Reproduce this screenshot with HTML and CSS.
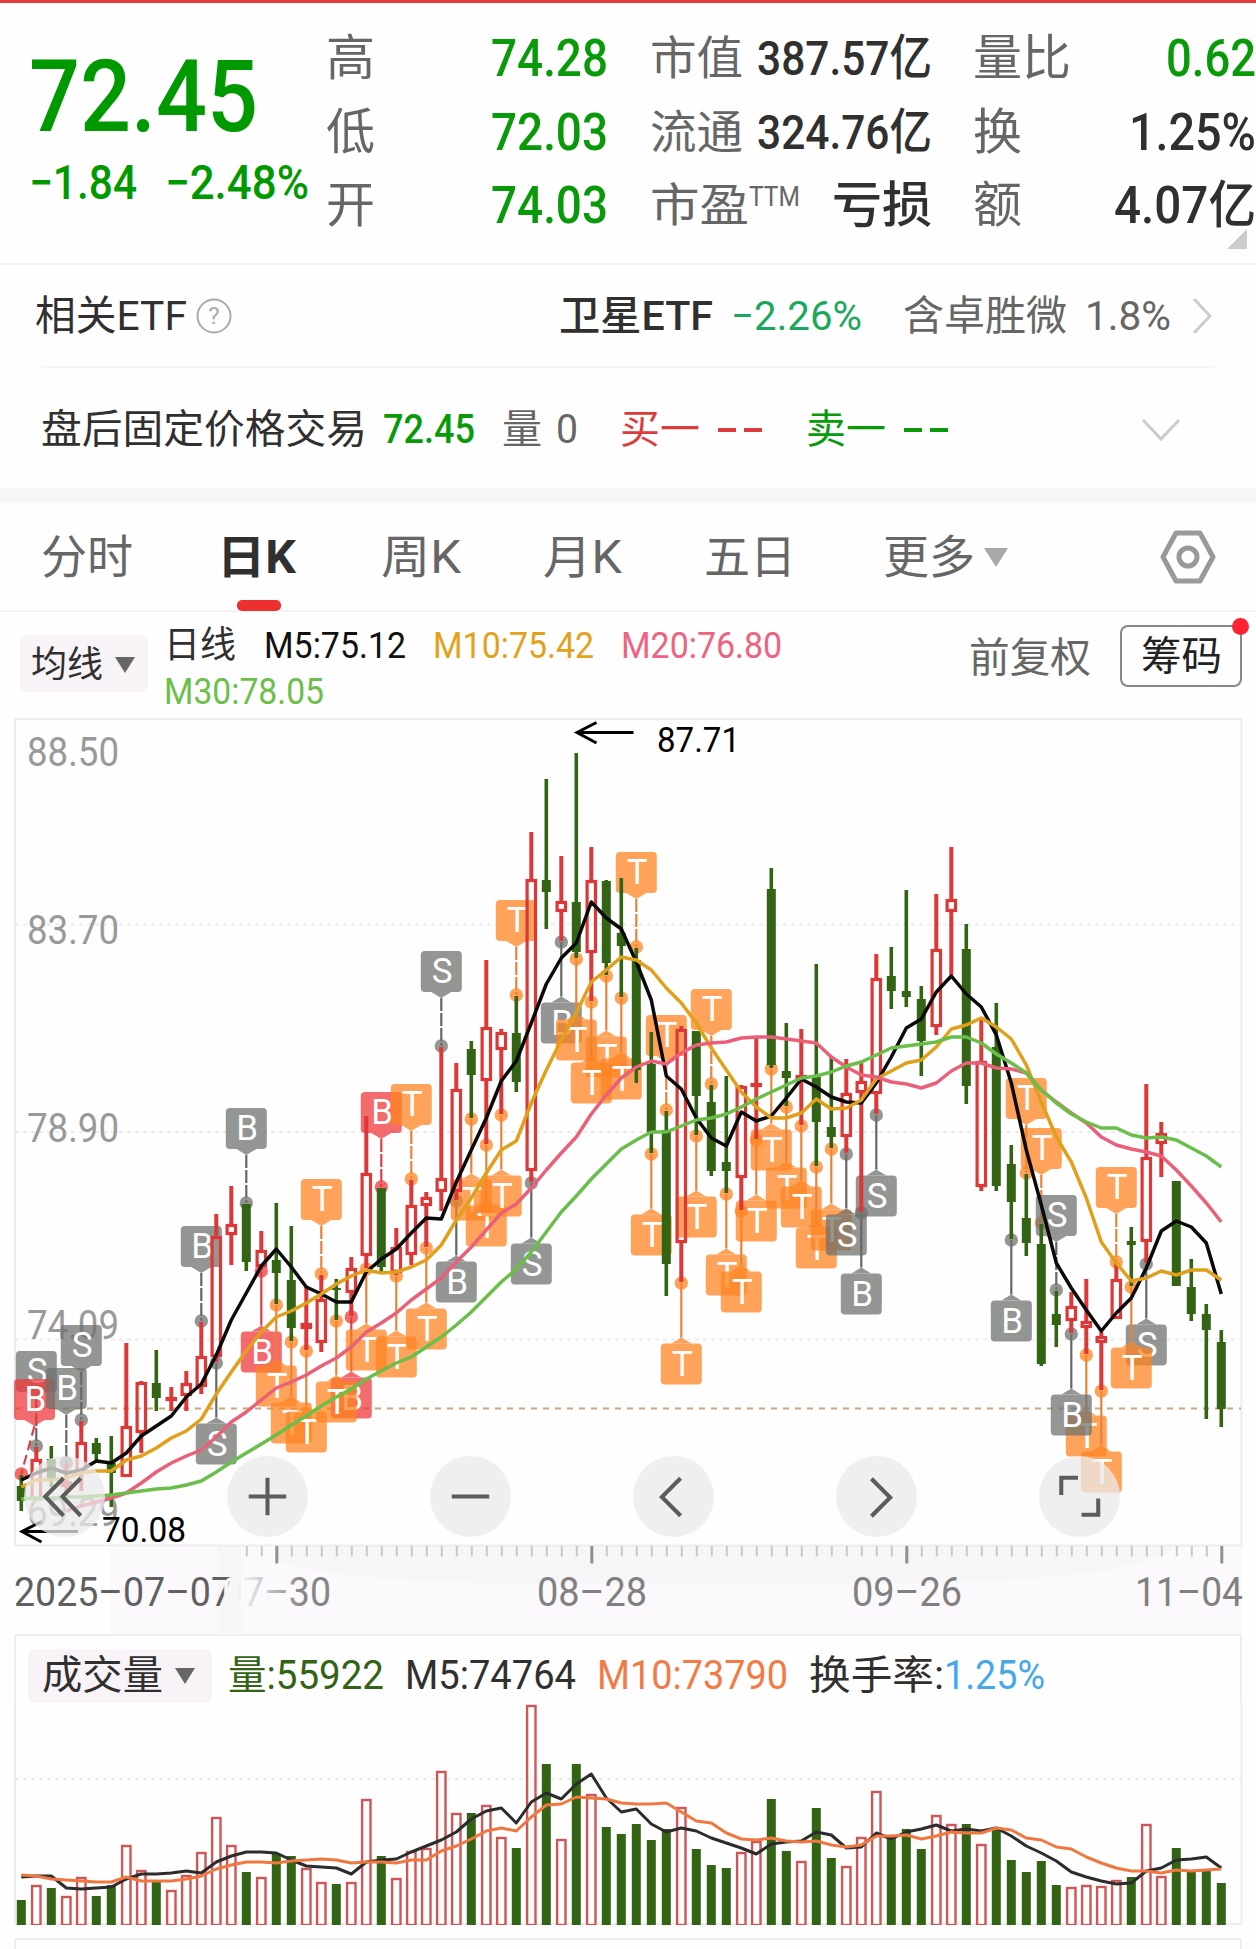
FILE: index.html
```
<!DOCTYPE html>
<html lang="zh-CN">
<head>
  <meta charset="UTF-8">
  <title>卓胜微 日K</title>
  <link rel="stylesheet" href="styles.css">
</head>
<body>
  <header class="quote">
    <div class="price-box">
      <div class="price"><span data-w="229">72.45</span></div>
      <div class="change"><span data-w="108">−1.84</span><span data-w="144">−2.48%</span></div>
    </div>
    <div class="stats col-a">
      <div><span>高</span><b class="green" data-w="117">74.28</b></div>
      <div><span>低</span><b class="green" data-w="117">72.03</b></div>
      <div><span>开</span><b class="green" data-w="117">74.03</b></div>
    </div>
    <div class="stats col-b">
      <div><span data-w="93">市值</span><b data-w="175">387.57亿</b></div>
      <div><span data-w="93">流通</span><b data-w="175">324.76亿</b></div>
      <div><span data-w="99">市盈</span><sup data-w="51">TTM</sup><b data-w="100">亏损</b></div>
    </div>
    <div class="stats col-c">
      <div><span>量比</span><b class="green" data-w="90">0.62</b></div>
      <div><span>换</span><b data-w="127">1.25%</b></div>
      <div><span>额</span><b data-w="142">4.07亿</b></div>
    </div>
    <i class="corner"></i>
  </header>

  <section class="etf">
    <span class="dark" data-w="152">相关ETF</span>
    <svg class="help" width="36" height="36" viewBox="0 0 36 36"><circle cx="18" cy="18" r="16.5"/><text x="18" y="26">?</text></svg>
    <span class="etf-name" data-w="154">卫星ETF</span>
    <span class="etf-rate" data-w="131">−2.26%</span>
    <span class="etf-hold" data-w="164">含卓胜微</span>
    <span data-w="86">1.8%</span>
    <svg class="more" width="20" height="38" viewBox="0 0 20 38"><path d="M2 2L18 19L2 36"/></svg>
  </section>

  <section class="after">
    <span class="dark" data-w="326">盘后固定价格交易</span>
    <b class="green after-price" data-w="92">72.45</b>
    <span class="after-vol">量</span>
    <span class="after-zero" data-w="22">0</span>
    <span class="red after-buy" data-w="80">买一</span>
    <i class="dash red-bg"></i><i class="dash red-bg"></i>
    <span class="green after-sell" data-w="80">卖一</span>
    <i class="dash green-bg"></i><i class="dash green-bg"></i>
    <svg class="fold" width="40" height="24" viewBox="0 0 40 24"><path d="M2 2L20 21L38 2"/></svg>
  </section>

  <nav class="tabs">
    <a data-w="92">分时</a>
    <a class="active" data-w="79">日K</a>
    <a data-w="80">周K</a>
    <a data-w="79">月K</a>
    <a data-w="92">五日</a>
    <a data-w="92">更多</a>
    <svg class="tab-arrow" width="26" height="21" viewBox="0 0 26 21"><path d="M1 1H25L13 20Z"/></svg>
    <svg class="setting" width="56" height="54" viewBox="0 0 56 54"><path d="M16 3H40L53 27L40 51H16L3 27Z"/><circle cx="28" cy="27" r="9"/></svg>
  </nav>

  <section class="legend">
    <div class="chip">均线<svg width="20" height="16" viewBox="0 0 20 16"><path d="M0 0H20L10 16Z"/></svg></div>
    <div class="ma-list">
      <div class="ma-row">
        <span class="dark" data-w="72">日线</span>
        <span class="c-black" data-w="142">M5:75.12</span>
        <span class="c-gold" data-w="161">M10:75.42</span>
        <span class="c-pink" data-w="161">M20:76.80</span>
      </div>
      <div class="ma-row"><span class="c-green" data-w="160">M30:78.05</span></div>
    </div>
    <span class="fuquan" data-w="122">前复权</span>
    <button class="chips-btn"><span data-w="81">筹码</span><i></i></button>
  </section>

  <section class="kline">
    <svg id="kline" width="1256" height="915" viewBox="0 718 1256 915"></svg>
    <div class="tools">
      <button><svg viewBox="0 0 80 80"><path d="M39 22L21 40L39 59M56 22L38 40L56 59"/></svg></button>
      <button><svg viewBox="0 0 80 80"><path d="M21.500 40H58.500M40 21.500V58.500"/></svg></button>
      <button><svg viewBox="0 0 80 80"><path d="M21.500 40H58.500"/></svg></button>
      <button><svg viewBox="0 0 80 80"><path d="M47 22L28.500 40.500L47 59"/></svg></button>
      <button><svg viewBox="0 0 80 80"><path d="M35 22.500L53.500 41L35 59.500"/></svg></button>
      <button><svg viewBox="0 0 80 80"><path d="M22 38.500V21.500H38.500M42 58H58.500V42"/></svg></button>
    </div>
  </section>

  <section class="volume">
    <div class="vol-head">
      <div class="chip"><span data-w="121">成交量</span><svg width="20" height="16" viewBox="0 0 20 16"><path d="M0 0H20L10 16Z"/></svg></div>
      <span class="c-vol" data-w="156">量:55922</span>
      <span class="dark" data-w="171">M5:74764</span>
      <span class="c-orange" data-w="191">M10:73790</span>
      <span class="dark turnover" data-w="135">换手率:</span>
      <span class="c-blue" data-w="101">1.25%</span>
    </div>
    <svg id="volume" width="1256" height="222" viewBox="0 1703 1256 222"></svg>
  </section>
  <section class="next-panel"></section>

  <script src="chart.js"></script>
</body>
</html>
```
FILE: styles.css
```
* {
  box-sizing: border-box;
}
body {
  margin: 0;
  width: 1256px;
  height: 1949px;
  overflow: hidden;
  background: #fefefe;
  color: #666;
  font-family: Roboto, "Noto Sans CJK SC", sans-serif;
}
b, i, sup {
  font-style: normal;
}
[data-w] {
  display: inline-block;
  flex: none;
  white-space: nowrap;
  transform-origin: 0 50%;
}
.green { color: #099a09; }
.red { color: #dc3c3c; }
.dark { color: #303030; }
.red-bg { background: #dc3c3c; }
.green-bg { background: #099a09; }
.c-black { color: #111; }
.c-gold { color: #e3a21a; }
.c-pink { color: #ee6480; }
.c-green { color: #6cc04a; }
.c-vol { color: #326414; }
.c-orange { color: #f27a45; }
.c-blue { color: #46a8e8; }

/* quote header */
.quote {
  position: relative;
  display: flex;
  height: 265px;
  padding-top: 19px;
  border-top: 3px solid #e03c40;
  border-bottom: 2px solid #f5f5f5;
}
.price-box {
  width: 326px;
  padding-left: 29px;
  color: #009a00;
}
.price {
  height: 120px;
  margin-top: 15px;
  line-height: 120px;
  font-size: 101px;
  font-weight: 500;
}
.change {
  display: flex;
  gap: 28px;
  height: 56px;
  margin-top: -2px;
  line-height: 56px;
  font-size: 48px;
  font-weight: 500;
}
.stats div {
  display: flex;
  height: 73.500px;
  line-height: 73px;
  font-size: 49px;
}
.stats b {
  margin-left: auto;
  font-weight: 500;
  font-size: 51px;
}
.stats b:not(.green) {
  color: #303030;
}
.col-a { width: 282px; }
.col-b { width: 282px; margin-left: 42px; }
.col-b div { font-size: 46px; }
.col-b b { font-size: 49px; }
.col-c { width: 283px; margin-left: 41px; }
.stats sup {
  margin-top: -8px;
  font-size: 27px;
  font-weight: 400;
}
.corner {
  position: absolute;
  right: 9px;
  bottom: 14px;
  width: 20px;
  height: 20px;
  background: #ccc;
  clip-path: polygon(100% 0, 100% 100%, 0 100%);
}

/* related etf */
.etf {
  display: flex;
  align-items: center;
  height: 101px;
  padding-left: 35px;
  line-height: 50px;
  font-size: 41px;
}
.help {
  margin-left: 9px;
  fill: none;
  stroke: #aaa;
  stroke-width: 2;
}
.help text {
  fill: #aaa;
  stroke: none;
  font-size: 24px;
  text-anchor: middle;
}
.etf-name { margin-left: 327px; color: #303030; font-weight: 500; }
.etf-rate { margin-left: 18px; color: #1aa85c; }
.etf-hold { margin-left: 41px; margin-right: 18px; }
.more {
  margin-left: 21px;
  fill: none;
  stroke: #ccc;
  stroke-width: 3;
}

/* after-hours trade */
.after {
  display: flex;
  align-items: center;
  height: 122px;
  margin: 0 41px;
  padding-top: 3px;
  border-top: 2px solid #f5f5f5;
  line-height: 50px;
  font-size: 40px;
}
.after b { font-weight: 500; }
.after-price { margin-left: 16px; }
.after-vol { margin-left: 27px; }
.after-zero { margin-left: 14px; }
.after-buy { margin-left: 42px; margin-right: 18px; }
.after-sell { margin-left: 44px; margin-right: 18px; }
.dash {
  width: 18px;
  height: 4px;
}
.dash + .dash { margin-left: 8px; }
.fold {
  margin-left: 193px;
  fill: none;
  stroke: #ccc;
  stroke-width: 3;
}

/* period tabs */
.tabs {
  display: flex;
  align-items: center;
  height: 124px;
  padding: 2px 0 0 41px;
  border-top: 14px solid #f6f6f6;
  border-bottom: 2px solid #f3f3f3;
  line-height: 56px;
  font-size: 46px;
}
.tabs a {
  margin-right: 85px;
}
.tabs a:nth-child(1) { margin-right: 84px; }
.tabs a:nth-child(3), .tabs a:nth-child(4) { margin-right: 82px; }
.tabs a:nth-child(5) { margin-right: 87px; }
.tabs .active {
  position: relative;
  color: #303030;
  font-weight: 700;
}
.tabs .active::after {
  content: "";
  position: absolute;
  left: 19px;
  bottom: -26px;
  width: 42px;
  height: 11px;
  border-radius: 5px;
  background: #ec3030;
}
.tab-arrow {
  margin-left: -77px;
  fill: #aaa8aa;
}
.setting {
  margin-left: 151px;
  fill: none;
  stroke: #999;
  stroke-width: 5;
  stroke-linejoin: round;
}

/* moving average legend */
.legend {
  display: flex;
  height: 106px;
}
.chip {
  display: flex;
  align-items: center;
  justify-content: space-between;
  border-radius: 8px;
  background: #f7f3f7;
  color: #303030;
}
.chip svg {
  fill: #666;
}
.legend .chip {
  width: 128px;
  height: 57px;
  margin: 23px 16px 0 20px;
  padding: 2px 13px 0 11px;
  line-height: 50px;
  font-size: 36px;
}
.ma-list {
  width: 804px;
  padding-top: 11px;
}
.ma-row {
  display: flex;
  gap: 28px;
  height: 46px;
  line-height: 46px;
  font-size: 37px;
}
.ma-row .c-gold, .ma-row .c-pink { margin-left: -1px; }
.fuquan {
  height: 60px;
  margin: 17px 0 0 1px;
  line-height: 58px;
  font-size: 41px;
}
.chips-btn {
  position: relative;
  width: 122px;
  height: 62px;
  margin: 13px 0 0 29px;
  padding: 0;
  border: 2px solid #888;
  border-radius: 8px;
  background: none;
  color: #222;
  font: 40px/60px Roboto, "Noto Sans CJK SC", sans-serif;
}
.chips-btn i {
  position: absolute;
  top: -9px;
  right: -9px;
  width: 17px;
  height: 17px;
  border-radius: 50%;
  background: #ff2233;
}

/* candle chart */
.kline {
  position: relative;
  height: 915px;
}
.kline > svg, .volume > svg {
  display: block;
}
.frame { fill: none; stroke: #ededed; stroke-width: 2; }
.grid { stroke: #ebebeb; stroke-width: 2; stroke-dasharray: 4 4; }
.now { stroke: #c4a87c; stroke-width: 2; stroke-dasharray: 6 6; }
.axis { fill: #999; font-size: 40px; }
.date { fill: #808080; font-size: 40px; }
.date-first { fill: #606060; }
.tag text {
  fill: #fff;
  font-size: 35px;
  text-anchor: middle;
}
.peak { font-size: 35px; fill: #000; }
.line { fill: none; stroke-width: 3; stroke-linejoin: round; }
.kline .line { stroke-width: 3.500; }
.arrow { fill: none; stroke: #000; stroke-width: 3; }
.tools {
  position: absolute;
  left: 24px;
  top: 738px;
  display: flex;
  gap: 122px;
}
.tools button {
  width: 81px;
  height: 81px;
  padding: 0;
  border: 0;
  border-radius: 50%;
  background: rgba(233, 233, 233, 0.75);
}
.tools svg {
  display: block;
  fill: none;
  stroke: #5c5c5c;
  stroke-width: 4;
}

/* volume */
.volume {
  height: 292px;
}
.vol-head {
  display: flex;
  align-items: center;
  height: 69px;
  margin: 1px 14px 0;
  padding: 12px 0 0 12px;
  border: 2px solid #efefef;
  border-bottom: 0;
  line-height: 50px;
  font-size: 40px;
}
.vol-head .chip {
  width: 184px;
  height: 54px;
  margin-right: 16px;
  padding: 0 17px 0 14px;
}
.vol-head > span { margin-right: 21px; }
.vol-head > .turnover { margin-right: 0; }
.next-panel {
  height: 30px;
  margin: 12px 14px 0;
  border: 2px solid #efefef;
}
```
FILE: chart.js
```
// squeeze the wide digits to the width given in data-w
document.querySelectorAll("[data-w]").forEach(el => {
  const natural = el.getBoundingClientRect().width;
  const w = Number(el.dataset.w);
  const right = parseFloat(getComputedStyle(el).marginRight);
  el.style.transform = `scaleX(${w / natural})`;
  el.style.marginRight = `${right + w - natural}px`;
});

const RED = "#dc3838";
const GREEN = "#326414";
const px = i => 21.3 + 15 * i;

// up/down, high, body top, body bottom, low
const candles = [
  "g 1475 1486 1501 1511", "r 1447 1459 1500 1500", "g 1446 1459 1478 1487", "r 1464 1481 1487 1495", "r 1421 1442 1473 1491",
  "g 1438 1443 1454 1460", "g 1436 1463 1473 1507", "r 1343 1426 1477 1477", "r 1381 1382 1433 1453", "g 1350 1383 1398 1411",
  "r 1387 1397 1399 1411", "r 1371 1383 1396 1411", "r 1322 1356 1387 1394", "r 1214 1236 1357 1362", "r 1186 1224 1235 1265",
  "g 1204 1204 1262 1271", "r 1231 1250 1267 1270", "g 1203 1260 1273 1304", "g 1226 1280 1328 1341", "r 1287 1323 1329 1350",
  "r 1275 1299 1343 1352", "g 1279 1288 1290 1320", "r 1257 1268 1293 1316", "r 1116 1173 1256 1268", "g 1188 1188 1267 1272",
  "r 1228 1247 1273 1275", "r 1180 1205 1255 1265", "r 1192 1197 1206 1247", "r 1047 1178 1192 1211", "r 1063 1089 1192 1200",
  "g 1041 1049 1075 1118", "r 960 1027 1081 1144", "r 1029 1032 1050 1114", "g 996 1033 1082 1092", "r 832 879 1171 1182",
  "g 779 880 892 929", "r 856 901 912 941", "g 753 902 952 958", "r 847 880 953 1001", "g 880 881 963 975",
  "g 878 933 946 997", "g 948 960 1070 1083", "g 1032 1064 1132 1153", "g 1111 1130 1264 1296", "r 1026 1029 1243 1282",
  "g 1031 1031 1096 1135", "g 1085 1102 1171 1176", "g 1076 1162 1171 1193", "r 1085 1086 1178 1210", "r 1038 1083 1087 1139",
  "g 868 889 1065 1068", "g 1023 1071 1078 1106", "r 1029 1075 1078 1125", "g 964 1077 1122 1166", "g 1057 1127 1137 1148",
  "r 1059 1093 1137 1153", "r 1063 1081 1093 1212", "r 954 978 1094 1114", "g 947 976 991 1009", "g 890 991 997 1007",
  "g 986 999 1041 1076", "r 894 949 1027 1035", "r 847 899 912 975", "g 924 949 1086 1104", "r 1020 1061 1187 1191",
  "g 1003 1047 1186 1191", "g 1145 1164 1202 1239", "g 1174 1218 1243 1256", "g 1224 1244 1364 1366", "g 1291 1314 1325 1347",
  "r 1292 1306 1321 1333", "r 1279 1321 1328 1354", "r 1332 1336 1343 1390", "r 1263 1279 1319 1319", "g 1227 1241 1245 1286",
  "r 1084 1157 1242 1263", "r 1122 1133 1144 1177", "g 1181 1181 1286 1286", "g 1259 1287 1314 1321", "g 1304 1314 1330 1419",
  "g 1330 1342 1409 1427"
].map(s => {
  const [dir, ...v] = s.split(" ");
  return { up: dir === "r", high: +v[0], top: +v[1], bottom: +v[2], low: +v[3] };
});

const ma5 = [1480,1473,1468,1473,1470,1461,1463,1453,1436,1426,1416,1397,1384,1355,1320,1293,1266,1249,1267,1287,1294,1302,1302,1272,1259,1249,1233,1218,1219,1182,1150,1118,1081,1061,1023,984,958,943,902,918,929,962,1000,1076,1089,1118,1138,1146,1112,1121,1116,1098,1079,1087,1097,1102,1103,1083,1057,1028,1019,992,976,994,1007,1035,1083,1150,1205,1263,1288,1310,1331,1313,1298,1268,1231,1221,1227,1243,1294];
const ma10 = [1487,1480,1480,1478,1473,1471,1471,1460,1456,1448,1438,1431,1419,1394,1372,1351,1332,1317,1311,1303,1294,1284,1276,1270,1273,1272,1267,1260,1245,1220,1198,1173,1150,1141,1103,1070,1040,1013,982,970,957,960,970,988,1003,1023,1048,1070,1092,1107,1118,1118,1113,1099,1109,1108,1100,1079,1071,1063,1060,1047,1029,1025,1018,1027,1039,1065,1102,1137,1162,1198,1242,1263,1281,1278,1271,1275,1270,1270,1280];
const ma20 = [1511,1506,1502,1498,1493,1483,1472,1463,1456,1450,1437,1422,1412,1400,1388,1382,1375,1366,1358,1347,1332,1323,1313,1300,1289,1278,1262,1247,1230,1213,1204,1188,1170,1153,1137,1114,1095,1078,1067,1061,1064,1053,1045,1043,1042,1038,1037,1037,1039,1041,1043,1057,1067,1075,1077,1082,1084,1088,1083,1071,1063,1063,1068,1069,1073,1090,1102,1113,1123,1137,1145,1149,1152,1156,1170,1186,1203,1222];
const ma30 = [1499,1498,1498,1497,1497,1496,1495,1493,1491,1489,1488,1485,1481,1472,1462,1453,1444,1435,1425,1416,1406,1397,1389,1379,1371,1363,1357,1347,1337,1325,1312,1297,1282,1269,1252,1232,1212,1196,1179,1164,1149,1140,1132,1132,1126,1120,1118,1114,1107,1099,1092,1085,1078,1076,1072,1066,1062,1055,1048,1046,1044,1042,1037,1037,1043,1054,1063,1073,1090,1103,1114,1122,1128,1128,1135,1138,1137,1140,1148,1156,1167];

// trade marks: candle index, letter, u = over the candle, d = under it
const marks = "1Su 0Bu 3Bu 4Su 12Bu 13Sd 15Bu 16Bd 17Td 18Td 19Td 20Tu 22Bd 21Td 23Td 24Bu 25Td 26Tu 27Td 28Su 29Bd 30Td 31Td 32Td 33Tu 34Sd 36Bd 37Td 39Td 38Td 40Td 41Tu 42Td 43Tu 44Td 45Td 46Tu 47Td 48Td 49Td 50Td 51Td 52Td 53Td 54Td 55Sd 56Bd 57Sd 66Bd 67Tu 68Tu 69Su 71Td 70Bd 72Td 73Tu 75Sd 74Td".split(" ");
const redMarks = [0, 16, 22, 24];

function polyline(values, color, from = 0) {
  const pts = values.map((y, i) => `${px(i + from)},${y}`).join(" ");
  return `<polyline class="line" points="${pts}" stroke="${color}"/>`;
}

function text(x, y, w, cls, str, extra = "") {
  return `<text class="${cls}" x="${x}" y="${y}" textLength="${w}" lengthAdjust="spacingAndGlyphs" ${extra}>${str}</text>`;
}

function drawMark(m) {
  const [, n, letter, side] = m.match(/(\d+)(\w)(\w)/);
  const i = Number(n);
  const c = candles[i];
  const x = px(i);
  const over = side === "u";
  const y = over ? c.high - 1 : c.low + 1;
  const top = over ? y - 95 : y + 60.5;
  const bx = Math.max(x, 34.5);
  const tip = over ? top + 47 : top - 6;
  const edge = over ? top + 41 : top;
  const color = letter === "T" ? "#ff8420" : redMarks.includes(i) ? "#f0383a" : "#6e726e";
  const stem = letter === "T" ? "#e8833a" : redMarks.includes(i) ? "#d8434a" : "#666";
  const dash = i === 0 ? "10 5" : over ? "13 2" : "none";
  return `<g class="tag">
    <line x1="${bx}" y1="${tip}" x2="${x}" y2="${y}" stroke="${stem}" stroke-width="2.2" stroke-dasharray="${dash}"/>
    <g fill="${color}" opacity="0.74">
      <circle cx="${x}" cy="${y}" r="6.7"/>
      <path d="M${bx - 10} ${edge}L${bx} ${tip}L${bx + 10} ${edge}Z"/>
      <rect x="${bx - 20.5}" y="${top}" width="41" height="41" rx="4"/>
    </g>
    <text x="${bx + 0.8}" y="${top + 32}">${letter}</text>
  </g>`;
}

function drawCandle(c, i) {
  const x = px(i);
  if (!c.up) {
    return `<path d="M${x} ${c.high}V${c.low}" stroke="${GREEN}" stroke-width="3.6"/>
      <rect x="${x - 4.5}" y="${c.top}" width="9" height="${c.bottom - c.top}" fill="${GREEN}"/>`;
  }
  const h = Math.max(c.bottom - c.top - 3, 1);
  return `<path d="M${x} ${c.high}V${c.top}M${x} ${c.bottom}V${c.low}" stroke="${RED}" stroke-width="4"/>
    <rect x="${x - 4.2}" y="${c.top + 1.5}" width="8.4" height="${h}" fill="none" stroke="${RED}" stroke-width="3.2"/>`;
}

let k = `<defs>
  <linearGradient id="fade" gradientUnits="userSpaceOnUse" x1="236" y1="0" x2="320" y2="0">
    <stop offset="0" stop-color="#f8f8f8"/><stop offset="0.3" stop-color="#d0d0d0"/><stop offset="0.8" stop-color="#858585"/>
  </linearGradient></defs>
  <rect x="110" y="1546" width="1132" height="95" fill="#fcf9fd"/>
  <path d="M276 1546H1175Q1140 1582 870 1584H540Q330 1582 276 1560Z" fill="#f7f6f7"/>
  <rect x="217" y="1546" width="24" height="95" fill="#f6f6f6"/>
  <rect class="frame" x="15" y="719" width="1226.5" height="826.5"/>`;
[924.5, 1132, 1339.5].forEach(y => k += `<path class="grid" d="M15 ${y}H1241"/>`);
k += `<path class="now" d="M15 1408.5H1241"/>`;
[["88.50", 766], ["83.70", 944], ["78.90", 1141.5], ["74.09", 1339], ["69.29", 1526]]
  .forEach(([s, y]) => k += text(27, y, 92, "axis", s));
k += marks.map(drawMark).join("");
k += candles.map(drawCandle).join("");
k += polyline(ma5, "#0a0a0a") + polyline(ma10, "#e0a01c") + polyline(ma20, "#ea6078", 3) + polyline(ma30, "#6abf4b");
k += `<path class="arrow" d="M577 732.500H633.500M596.500 722.500L577 732.500L596.500 743M22 1531.500H78M41.500 1521.500L22 1531.500L41.500 1542"/>`;
k += text(657, 752, 83, "peak", "87.71") + text(102, 1541.5, 84, "peak", "70.08");
for (let i = 15; i <= 80; i++) {
  const major = (i - 17) % 21 === 0;
  k += `<path d="M${px(i) + 0.5} 1546V${major ? 1563.5 : 1556.5}" stroke="${major ? "#909090" : "#c8c8c8"}" stroke-width="${major ? 3 : 2}"/>`;
}
k += text(14, 1606, 218, "date date-first", "2025–07–07");
k += text(222, 1606, 109, "date", "07–30", 'style="fill:url(#fade)"');
k += text(537, 1606, 110, "date", "08–28") + text(852, 1606, 110, "date", "09–26") + text(1135, 1606, 108, "date", "11–04");
document.getElementById("kline").innerHTML = k;

const volTop = [1900,1885,1888,1896,1877,1896,1885,1845,1870,1882,1890,1875,1852,1817,1845,1872,1877,1854,1856,1868,1882,1884,1882,1799,1856,1878,1851,1848,1771,1813,1813,1805,1837,1848,1705,1764,1839,1764,1794,1827,1834,1824,1840,1829,1807,1849,1865,1868,1852,1841,1799,1851,1861,1808,1858,1866,1837,1791,1837,1829,1849,1815,1824,1824,1844,1827,1860,1872,1861,1885,1887,1885,1886,1880,1877,1824,1876,1848,1872,1869,1883];
const vol5 = [1877,1876,1876,1888,1889,1888,1887,1879,1874,1874,1873,1871,1873,1862,1856,1852,1852,1853,1860,1866,1867,1868,1874,1862,1860,1859,1852,1846,1840,1832,1819,1811,1808,1823,1802,1793,1799,1784,1774,1798,1812,1809,1824,1832,1828,1831,1838,1843,1848,1854,1844,1842,1841,1832,1835,1848,1847,1833,1839,1832,1829,1825,1831,1829,1831,1828,1836,1846,1853,1861,1872,1877,1881,1884,1883,1871,1868,1860,1859,1857,1868];
const vol10 = [1875,1876,1879,1880,1881,1882,1882,1877,1881,1881,1881,1879,1876,1869,1865,1862,1862,1863,1861,1860,1859,1860,1863,1862,1862,1863,1860,1860,1851,1846,1839,1831,1828,1831,1817,1805,1804,1797,1798,1799,1803,1804,1804,1803,1812,1821,1823,1833,1839,1840,1838,1841,1842,1841,1845,1847,1845,1836,1836,1835,1839,1836,1832,1833,1833,1828,1830,1838,1840,1847,1849,1857,1863,1868,1871,1871,1873,1870,1871,1870,1869];

let v = `<path class="frame" d="M15 1703V1924H1241.500V1703"/><path class="grid" d="M15 1779H1241"/>`;
volTop.forEach((y, i) => {
  v += candles[i].up
    ? `<rect x="${px(i) - 4.2}" y="${y + 1}" width="8.400" height="${1924 - y}" fill="#fff" stroke="#cf5656" stroke-width="2.4"/>`
    : `<rect x="${px(i) - 4.5}" y="${y}" width="9" height="${1925 - y}" fill="${GREEN}"/>`;
});
v += polyline(vol5, "#2c2c2c") + polyline(vol10, "#f07840");
document.getElementById("volume").innerHTML = v;
```
